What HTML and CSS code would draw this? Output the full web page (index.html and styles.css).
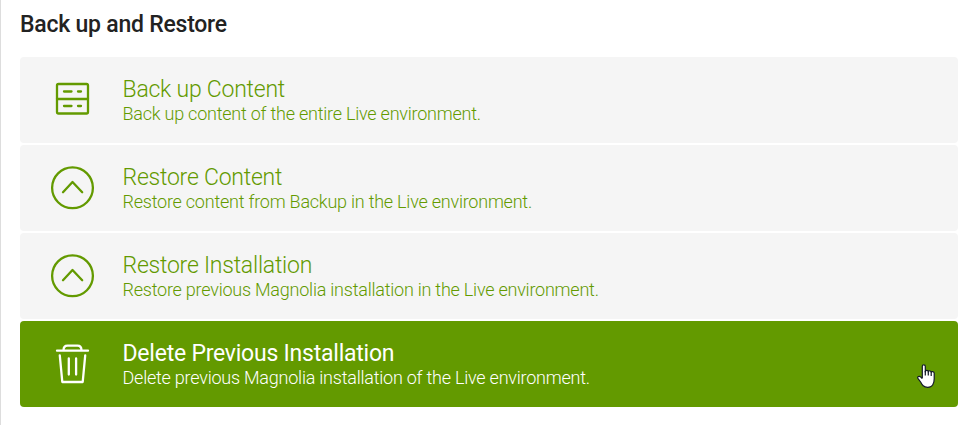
FILE: index.html
```html
<!DOCTYPE html>
<html lang="en">
<head>
<meta charset="utf-8">
<title>Back up and Restore</title>
<link rel="stylesheet" href="styles.css">
</head>
<body>
<main class="panel">
  <h1 class="heading">Back up and Restore</h1>
  <div class="actions">
    <div class="action">
      <svg class="icon" viewBox="0 0 48 48"><rect x="9" y="8" width="31" height="29.5" rx="1.5"/><path d="M9 23H40M16 15.5H23.5M30 15.5H33M16 30H23.5M30 30H33"/></svg>
      <div class="text"><h2 class="title">Back up Content</h2><p class="desc">Back up content of the entire Live environment.</p></div>
    </div>
    <div class="action">
      <svg class="icon" viewBox="0 0 48 48"><circle cx="24.5" cy="23.8" r="20.4"/><path d="M15 28.2L24.5 18L34.2 28.2"/></svg>
      <div class="text"><h2 class="title">Restore Content</h2><p class="desc">Restore content from Backup in the Live environment.</p></div>
    </div>
    <div class="action">
      <svg class="icon" viewBox="0 0 48 48"><circle cx="24.5" cy="23.8" r="20.4"/><path d="M15 28.2L24.5 18L34.2 28.2"/></svg>
      <div class="text"><h2 class="title">Restore Installation</h2><p class="desc">Restore previous Magnolia installation in the Live environment.</p></div>
    </div>
    <div class="action active">
      <svg class="icon" viewBox="0 0 48 48"><path d="M9 10.7H40M15.5 10.5C15.5 7 17.5 5.7 19.5 5.7H29.5C31.5 5.7 33.5 7 33.5 10.5M11.8 15.5L14.3 42H34.7L37.2 15.5M20.8 18.5V34.5M28.1 18.5V34.5"/></svg>
      <div class="text"><h2 class="title">Delete Previous Installation</h2><p class="desc">Delete previous Magnolia installation of the Live environment.</p></div>
      <svg class="cursor" viewBox="0 0 18 24"><path d="M5.3 14V2.3C5.3.3 8.3.3 8.3 2.3V8C8.3 5.7 11.3 6 11.3 8C11.3 6.2 14.2 6.4 14.2 8.5C14.2 7 17.2 7.3 17.2 9.3V15C17.2 19 15.5 23.3 10.7 23.3C6.5 23.3 5.2 21 3.6 18L.9 14.3C0 12.8 2.2 11.8 3.3 12.7L5.3 14.7"/><path d="M8.3 7V11.5M11.3 8V11.5M14.2 8.5V12"/></svg>
    </div>
  </div>
</main>
</body>
</html>
```
FILE: styles.css
```css
* { box-sizing: border-box; }
body { margin: 0; background: #fff; font-family: Roboto, sans-serif; letter-spacing: -0.23px; }
.panel { height: 425px; border-left: 1px solid #ddd; padding: 11px 22px 0 19px; }
.heading { margin: 0; height: 46px; font-size: 23px; line-height: 28px; font-weight: 500; color: #222; }
.actions { display: grid; gap: 2px; }
.action { position: relative; display: flex; align-items: center; height: 86px; padding-left: 28px; border-radius: 4px; background: #f5f5f5; color: #639a00; }
.active { background: #639a00; color: #fff; }
.icon { width: 48px; height: 48px; margin-right: 26.5px; fill: none; stroke: currentColor; stroke-width: 2.3; stroke-linecap: round; stroke-linejoin: round; }
.title { margin: 0; font-size: 23px; line-height: 27px; font-weight: 300; }
.desc { margin: 0; font-size: 18px; line-height: 22px; font-weight: 300; }
.active .title { font-weight: 400; }
.cursor { position: absolute; right: 23px; top: 43px; width: 18px; height: 24px; fill: #fff; stroke: #111827; stroke-width: 1.2; stroke-linejoin: round; }
```
